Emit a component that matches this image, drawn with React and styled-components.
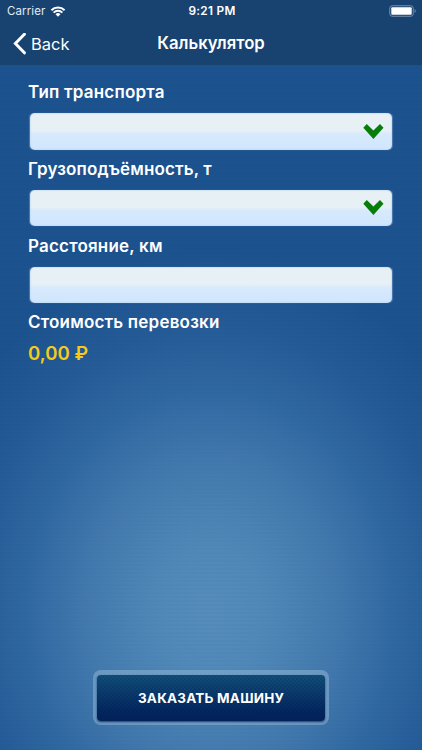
import styled, { createGlobalStyle } from "styled-components";

const GlobalStyle = createGlobalStyle`
  * {
    box-sizing: border-box;
  }

  body {
    margin: 0;
    background-color: #1b4f8c;
  }

  h1, p {
    margin: 0;
  }
`;

const Wrap = styled.div`
  width: 422px;
  height: 750px;
  display: flex;
  flex-direction: column;
  overflow: hidden;
  color: #fff;
  font-family: "Inter", "Liberation Sans", sans-serif;
  background:
    repeating-linear-gradient(
      to bottom,
      rgba(0, 30, 90, 0.02) 0px,
      rgba(0, 30, 90, 0.02) 2px,
      transparent 2px,
      transparent 4px
    ),
    radial-gradient(
      ellipse 300px 360px at 211px 612px,
      #558cba 0%,
      #5089b8 18%,
      #4279ad 42%,
      #2f68a1 62%,
      #245b97 80%,
      #1c528e 100%
    );
`;

const Header = styled.header`
  height: 65px;
  flex-shrink: 0;
  background-color: #18426f;
`;

const StatusBar = styled.div`
  height: 22px;
  padding: 0 5px 0 7px;
  display: grid;
  grid-template-columns: 1fr auto 1fr;
  align-items: center;
`;
const Carrier = styled.div`
  display: flex;
  align-items: center;
  gap: 5px;
  font-size: 11.5px;
  letter-spacing: 0.1px;
  color: #e3ebf3;
`;
const Time = styled.div`
  font-size: 11.8px;
  font-weight: 600;
  letter-spacing: 0.3px;
`;
const Battery = styled.div`
  display: flex;
  justify-content: flex-end;
`;

const NavBar = styled.nav`
  height: 43px;
  padding: 0 13px;
  display: grid;
  grid-template-columns: 1fr auto 1fr;
  align-items: center;
`;
const Back = styled.button`
  all: unset;
  display: flex;
  align-items: center;
  gap: 5px;
  font-size: 16.5px;
  line-height: 20px;
`;
const Title = styled.h1`
  font-size: 16.7px;
  line-height: 43px;
  font-weight: 600;
`;

const Form = styled.form`
  flex: 1;
  padding: 14.2px 28px 0;
`;
const Label = styled.p`
  height: 27px;
  line-height: 27px;
  font-size: 17px;
  font-weight: 600;
  letter-spacing: ${({ $spacing }) => $spacing || "0.2px"};
`;
const Field = styled.div`
  height: 36.4px;
  margin: 7.2px 2px 6.1px;
  padding-right: 8px;
  display: flex;
  align-items: center;
  justify-content: flex-end;
  border-radius: 5px;
  background: linear-gradient(#e8f0f5 0%, #e7f0f6 48%, #d8eafc 56%, #cfe6fe 100%);
  box-shadow:
    inset 0 0 1px 0.5px rgba(175, 208, 235, 0.7),
    -1.5px 0 1px -0.5px rgba(130, 170, 208, 0.5),
    1.5px 0 1px -0.5px rgba(130, 170, 208, 0.5);
`;
const Price = styled.p`
  line-height: 34px;
  font-size: 18.6px;
  font-weight: 600;
  color: #f5cb1b;
`;

const Footer = styled.footer`
  height: 80px;
  display: flex;
  justify-content: center;
  align-items: flex-start;
`;
const ButtonFrame = styled.div`
  width: 236px;
  height: 55px;
  padding: 4.5px 4px;
  border-radius: 8px;
  background-color: rgba(140, 178, 212, 0.55);
`;
const OrderButton = styled.button`
  display: block;
  width: 228px;
  height: 46px;
  padding: 0;
  border: 0;
  border-radius: 4px;
  color: #fff;
  font-family: "Inter", "Liberation Sans", sans-serif;
  font-size: 13.5px;
  font-weight: 700;
  letter-spacing: 0.2px;
  background:
    radial-gradient(circle, rgba(0, 20, 70, 0.15) 0.7px, transparent 1.1px) 0 0 / 4px 4px,
    radial-gradient(circle, rgba(0, 20, 70, 0.15) 0.7px, transparent 1.1px) 2px 2px / 4px 4px,
    linear-gradient(#105079 0%, #0b3a6c 40%, #03265f 80%, #02225a 100%);
  box-shadow: 0 1px 2px rgba(10, 40, 90, 0.8);
`;

const WifiIcon = () => (
  <svg width="16" height="11" viewBox="0 0 15 11" fill="none" stroke="#fff">
    <path d="M0.9 4.2a9.3 9.3 0 0 1 13.2 0" strokeWidth="2" />
    <path d="M3.1 6.6a6.2 6.2 0 0 1 8.8 0" strokeWidth="1.8" />
    <path d="M5 8.3a3.5 3.5 0 0 1 5 0L7.5 10.8z" fill="#fff" stroke="none" />
  </svg>
);

const BatteryIcon = () => (
  <svg width="28" height="12" viewBox="0 0 28 12">
    <rect x="0.75" y="0.75" width="23.5" height="10.5" rx="2.5" fill="none" stroke="#7890ab" />
    <rect x="2.3" y="2.3" width="20.4" height="7.4" rx="1" fill="#fff" />
    <path d="M25.6 4v4c1.5-.5 1.5-3.5 0-4z" fill="#7890ab" />
  </svg>
);

const BackIcon = () => (
  <svg width="13" height="22" viewBox="0 0 13 22" fill="none" stroke="#fff" strokeWidth="3">
    <path d="M11.4 1.2L2.4 10.5l9 9.3" strokeLinecap="round" />
  </svg>
);

const ArrowIcon = () => (
  <svg width="21" height="16" viewBox="0 0 21 16">
    <path d="M0.3 3.8L3.8 0L10.4 6.4L17 0L20.5 3.8L10.4 15z" fill="#087d0b" />
  </svg>
);

const App = () => {
  return (
    <Wrap>
      <GlobalStyle />
      <Header>
        <StatusBar>
          <Carrier>
            Carrier
            <WifiIcon />
          </Carrier>
          <Time>9:21 PM</Time>
          <Battery>
            <BatteryIcon />
          </Battery>
        </StatusBar>
        <NavBar>
          <Back type="button">
            <BackIcon />
            Back
          </Back>
          <Title>Калькулятор</Title>
        </NavBar>
      </Header>

      <Form>
        <Label>Тип транспорта</Label>
        <Field>
          <ArrowIcon />
        </Field>
        <Label $spacing="0.12px">Грузоподъёмность, т</Label>
        <Field>
          <ArrowIcon />
        </Field>
        <Label>Расстояние, км</Label>
        <Field />
        <Label>Стоимость перевозки</Label>
        <Price>0,00 ₽</Price>
      </Form>

      <Footer>
        <ButtonFrame>
          <OrderButton type="button">ЗАКАЗАТЬ МАШИНУ</OrderButton>
        </ButtonFrame>
      </Footer>
    </Wrap>
  );
};

export default App;
